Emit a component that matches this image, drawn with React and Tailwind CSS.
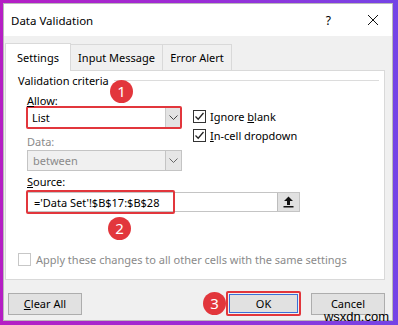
import React from 'react';

const font = { fontFamily: '"Noto Sans", "Open Sans", sans-serif' };

function Badge({ n, className }) {
    return (
        <div className={`absolute w-[23px] h-[23px] rounded-full bg-[#e2363c] text-white text-[15px] leading-none flex items-center justify-center ${className}`}>
            {n}
        </div>
    );
}

function Chevron({ color = '#444' }) {
    return (
        <svg width="9" height="6" viewBox="0 0 9 6">
            <path d="M0.5 0.5 L4.5 4.5 L8.5 0.5" fill="none" stroke={color} strokeWidth="1" />
        </svg>
    );
}

function Check() {
    return (
        <div className="w-[13px] h-[13px] border border-[#333] bg-white flex items-center justify-center">
            <svg width="11" height="11" viewBox="0 0 11 11">
                <path d="M1.5 5.5 L4.2 8.2 L9.5 2" fill="none" stroke="#222" strokeWidth="1.3" />
            </svg>
        </div>
    );
}

export default function App() {
    return (
        <div
            className="w-[398px] h-[325px] bg-gradient-to-r from-[#b51ec4] via-[#9a2bd6] to-[#7444e6] pt-[3px] pl-[3px] pr-[5px] pb-[4px] text-[11px] leading-[15px] text-black"
            style={font}
        >
            <div className="relative flex flex-col h-full bg-[#f0f0f0] border border-[#b9b9b9]">
                {/* title bar */}
                <div className="h-[32px] bg-white flex items-center pl-[7px] shrink-0">
                    <span className="text-[11.5px]">Data Validation</span>
                    <span className="ml-auto text-[12px] mr-[36px]">?</span>
                    <svg width="12" height="12" viewBox="0 0 12 12" className="mr-[13px]">
                        <path d="M1 1 L11 11 M11 1 L1 11" stroke="#111" strokeWidth="1" />
                    </svg>
                </div>

                {/* tabs */}
                <div className="flex items-end pl-[1px] mt-[6px] h-[28px] shrink-0">
                    <div className="relative z-10 h-[28px] w-[66px] bg-white border border-[#d9d9d9] border-b-0 flex items-center justify-center -mb-px">
                        Settings
                    </div>
                    <div className="h-[26px] w-[92px] border border-[#d9d9d9] border-l-0 border-b-0 flex items-center justify-center">
                        Input Message
                    </div>
                    <div className="h-[26px] w-[69px] border border-[#d9d9d9] border-l-0 border-b-0 flex items-center justify-center">
                        Error Alert
                    </div>
                </div>

                {/* panel */}
                <div className="relative ml-[1px] mr-[7px] h-[210px] bg-white border border-[#d9d9d9] shrink-0">
                    <div className="flex items-center pl-[12px] pt-[2px] pr-[5px]">
                        <span>Validation criteria</span>
                        <div className="flex-1 h-px bg-[#dcdcdc] ml-[5px]" />
                    </div>

                    <div className="flex pl-[21px] mt-[4px]">
                        <div className="w-[155px]">
                            <div className="h-[16px] flex items-center"><span><u>A</u>llow:</span></div>
                            <div className="-mt-[2px] w-[156px] h-[23px] border-2 border-[#e2363c] rounded-[2px] -ml-[1px] flex">
                                <div className="flex-1 bg-white flex items-center pl-[4px]">List</div>
                                <div className="w-[15px] bg-[#e3e3e3] border-l border-[#c9c9c9] flex items-center justify-center">
                                    <Chevron />
                                </div>
                            </div>
                            <div className="h-[16px] mt-[4px] flex items-center text-[#8a8a8a]">Data:</div>
                            <div className="mt-[1px] w-[155px] h-[21px] border border-[#c4c4c4] bg-[#f0f0f0] flex">
                                <div className="flex-1 flex items-center pl-[5px] text-[#8a8a8a]">between</div>
                                <div className="w-[16px] bg-[#e6e6e6] border-l border-[#c4c4c4] flex items-center justify-center">
                                    <Chevron color="#666" />
                                </div>
                            </div>
                        </div>
                        <div className="ml-[11px] mt-[17px] flex flex-col gap-[4px]">
                            <div className="flex items-center gap-[4px]">
                                <Check />
                                <span>Ignore <u>b</u>lank</span>
                            </div>
                            <div className="flex items-center gap-[4px]">
                                <Check />
                                <span><u>I</u>n-cell dropdown</span>
                            </div>
                        </div>
                    </div>

                    <div className="pl-[21px] mt-[2px]">
                        <div className="h-[16px] flex items-center"><span><u>S</u>ource:</span></div>
                        <div className="relative mt-[3px] w-[273px] h-[20px] border border-[#c4c4c4] bg-white flex">
                            <div className="flex-1 flex items-center pl-[6px]">='Data Set'!$B$17:$B$28</div>
                            <div className="w-[22px] bg-[#e1e1e1] border-l border-[#bdbdbd] flex items-center justify-center">
                                <svg width="11" height="12" viewBox="0 0 11 12">
                                    <path d="M5.5 0.5 L10 5 L7 5 L7 9 L4 9 L4 5 L1 5 Z" fill="#111" />
                                    <rect x="0.5" y="10" width="10" height="1.5" fill="#111" />
                                </svg>
                            </div>
                            <div className="absolute -left-[2px] -top-[3px] w-[149px] h-[24px] border-2 border-[#e2363c] rounded-[2px]" />
                        </div>
                    </div>

                    <div className="flex items-center pl-[12px] mt-[40px] gap-[5px] text-[#8a8a8a]">
                        <div className="w-[13px] h-[13px] border border-[#c7c7c7] bg-white" />
                        <span>Apply these changes to all other cells with the same settings</span>
                    </div>

                    <Badge n="1" className="left-[104px] top-[9px]" />
                    <Badge n="2" className="left-[102px] top-[146px]" />
                </div>

                {/* buttons */}
                <div className="relative flex items-center mt-[11px] pl-[4px] pr-[7px]">
                    <div className="w-[74px] h-[22px] bg-[#e1e1e1] border border-[#adadad] flex items-center justify-center">
                        <span><u>C</u>lear All</span>
                    </div>
                    <div className="ml-auto w-[75px] h-[25px] border-2 border-[#e2363c] rounded-[2px] flex">
                        <div className="flex-1 m-[1px] bg-[#e1e1e1] border border-[#3a6fd8] flex items-center justify-center">OK</div>
                    </div>
                    <div className="ml-[10px] w-[74px] h-[22px] bg-[#e1e1e1] border border-[#adadad] flex items-center justify-center">
                        Cancel
                    </div>
                    <Badge n="3" className="left-[199px] top-[1px]" />
                </div>

                <div className="absolute right-[3px] bottom-[-3px] text-[13px] leading-none text-black" style={{ fontFamily: '"Liberation Sans", Arial, sans-serif' }}>
                    wsxdn.com
                </div>
            </div>
        </div>
    );
}
